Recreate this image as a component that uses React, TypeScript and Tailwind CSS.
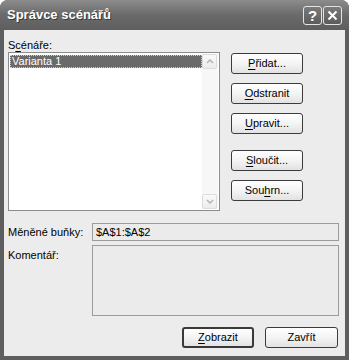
import { FC, ReactNode } from "react";

const font = "font-['Liberation_Sans',Arial,sans-serif]";

/* XP-style push button */
interface BtnProps {
  children: ReactNode;
  width?: string;
  isDefault?: boolean;
}

const Btn: FC<BtnProps> = ({ children, width = "w-[72px]", isDefault }) => {
  return (
    <div
      className={`${width} h-[21px] flex items-center justify-center rounded-[3px] bg-gradient-to-b from-white via-[#f4f4f4] to-[#e2e2e2] text-[11px] text-black ${
        isDefault ? "border-2 border-[#3a3a3a]" : "border border-[#3c3c3c]"
      }`}
    >
      {children}
    </div>
  );
};

const U: FC<{ children: ReactNode }> = ({ children }) => (
  <span className="underline underline-offset-2">{children}</span>
);

/* title bar control */
const CaptionBtn: FC<{ children: ReactNode }> = ({ children }) => (
  <div className="w-[19px] h-[19px] rounded-[3px] border border-[#e4e4e4] bg-gradient-to-b from-[#7a7a7a] to-[#5c5c5c] flex items-center justify-center text-white">
    {children}
  </div>
);

const ScrollArrow: FC<{ down?: boolean }> = ({ down }) => (
  <div className="w-[15px] h-[15px] rounded-[2px] border border-[#dcdcdc] bg-gradient-to-b from-[#fafafa] to-[#ececec] flex items-center justify-center">
    <svg width="8" height="5" viewBox="0 0 8 5">
      <path
        d={down ? "M1 1 L4 4 L7 1" : "M1 4 L4 1 L7 4"}
        fill="none"
        stroke="#b4b4b4"
        strokeWidth="1.5"
      />
    </svg>
  </div>
);

export default function App() {
  return (
    <div className={`w-[349px] h-[360px] bg-white ${font}`}>
      <div className="w-full h-full flex flex-col rounded-t-[8px] bg-[#5e5e5e] overflow-hidden">
        {/* Title bar */}
        <div className="h-[30px] flex items-center justify-between pl-[7px] pr-[7px] bg-gradient-to-b from-[#8c8c8c] via-[#6a6a6a] to-[#5e5e5e]">
          <p className="text-[13px] font-bold text-white [text-shadow:1px_1px_0_#3a3a3a]">
            Správce scénářů
          </p>
          <div className="flex gap-[1px]">
            <CaptionBtn>
              <span className="text-[15px] font-bold leading-none">?</span>
            </CaptionBtn>
            <CaptionBtn>
              <svg width="11" height="11" viewBox="0 0 11 11">
                <path d="M1.5 1.5 L9.5 9.5 M9.5 1.5 L1.5 9.5" stroke="white" strokeWidth="2" />
              </svg>
            </CaptionBtn>
          </div>
        </div>

        {/* Body */}
        <div className="flex-1 mx-[4px] mb-[4px] bg-[#ececec] pl-[4px] pr-[6px] pt-[8px] flex flex-col text-[11px] text-black">
          <div className="flex">
            <div className="flex flex-col">
              <p className="h-[14px] leading-[14px]">
                S<U>c</U>énáře:
              </p>
              <div className="w-[212px] h-[159px] border border-[#8c8c8c] bg-white p-[1px] flex">
                <div className="flex-1 pt-[1px]">
                  <div className="h-[13px] leading-[13px] bg-[#6a6a6a] text-white pl-[2px] outline outline-1 outline-dotted outline-[#cfcfcf] -outline-offset-1">
                    Varianta 1
                  </div>
                </div>
                <div className="w-[16px] bg-[#f7f7f7] flex flex-col justify-between">
                  <ScrollArrow />
                  <ScrollArrow down />
                </div>
              </div>
            </div>

            <div className="ml-[11px] pt-[15px] flex flex-col">
              <Btn>
                <span>
                  <U>P</U>řidat...
                </span>
              </Btn>
              <div className="h-[9px]" />
              <Btn>
                <span>
                  <U>O</U>dstranit
                </span>
              </Btn>
              <div className="h-[9px]" />
              <Btn>
                <span>
                  <U>U</U>pravit...
                </span>
              </Btn>
              <div className="h-[16px]" />
              <Btn>
                <span>
                  <U>S</U>loučit...
                </span>
              </Btn>
              <div className="h-[9px]" />
              <Btn>
                <span>
                  Sou<U>h</U>rn...
                </span>
              </Btn>
            </div>
          </div>

          {/* Changing cells */}
          <div className="mt-[12px] flex items-center">
            <p className="w-[84px]">Měněné buňky:</p>
            <div className="flex-1 h-[18px] border border-[#9c9c9c] bg-[#ebebeb] flex items-center pl-[3px]">
              $A$1:$A$2
            </div>
          </div>

          {/* Comment */}
          <div className="mt-[4px] flex">
            <p className="w-[84px] pt-[2px]">Komentář:</p>
            <div className="flex-1 h-[71px] border border-[#9c9c9c] bg-[#ebebeb]" />
          </div>

          <div className="mt-[11px] flex justify-end gap-[11px] pr-[1px]">
            <Btn isDefault>
              <span>
                <U>Z</U>obrazit
              </span>
            </Btn>
            <Btn width="w-[73px]">Zavřít</Btn>
          </div>
        </div>
      </div>
    </div>
  );
}
